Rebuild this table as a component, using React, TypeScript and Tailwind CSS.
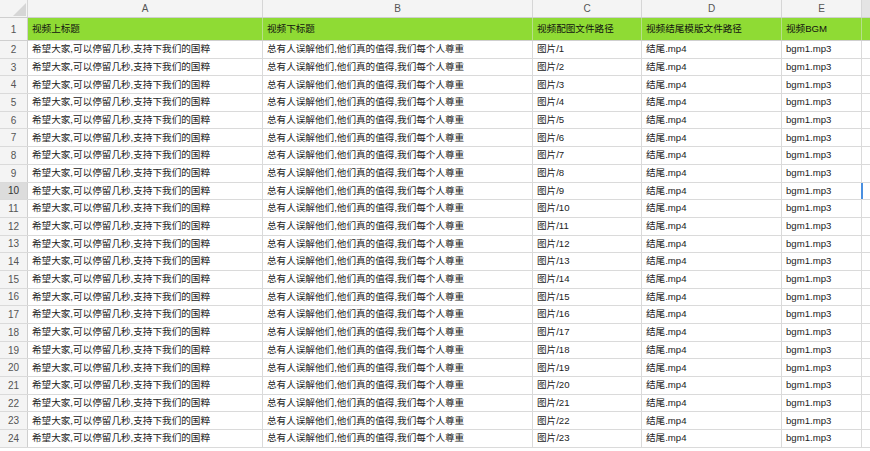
import React from 'react';

const cols = [
  { key: 'A', w: 'w-[235px]' },
  { key: 'B', w: 'w-[270px]' },
  { key: 'C', w: 'w-[109px]' },
  { key: 'D', w: 'w-[140px]' },
  { key: 'E', w: 'w-[80px]' },
];

const headerRow = ['视频上标题', '视频下标题', '视频配图文件路径', '视频结尾模版文件路径', '视频BGM'];

// data rows 2..24
const rows = Array.from({ length: 23 }, (_, i) => [
  '希望大家,可以停留几秒,支持下我们的国粹',
  '总有人误解他们,他们真的值得,我们每个人尊重',
  `图片/${i + 1}`,
  '结尾.mp4',
  'bgm1.mp3',
]);

const App: React.FC = () => {
  return (
    <div
      className="w-[870px] h-[451px] overflow-hidden bg-white text-[9.6px] text-[#222]"
      style={{ fontFamily: '"Liberation Sans", "Noto Sans CJK SC", sans-serif' }}
    >
      {/* Column letters */}
      <div className="flex h-[18px] bg-[#f4f4f4] border-b border-[#cfcfcf] text-[10px]">
        <div className="relative w-[28px] shrink-0 border-r border-[#d6d6d6]">
          <svg className="absolute left-0 top-0" width="28" height="18">
            <polygon points="13,16 26,16 26,3" fill="#d6d6d6" />
          </svg>
        </div>
        {cols.map(c => (
          <div
            key={c.key}
            className={`${c.w} shrink-0 border-r border-[#d6d6d6] flex items-center justify-center text-[#555]`}
          >
            {c.key}
          </div>
        ))}
        <div className="flex-1 bg-[#e4e4e4]" />
      </div>

      {/* Row 1: green header */}
      <div className="flex h-[23px] border-b border-[#cfcfcf]">
        <div className="w-[28px] shrink-0 bg-[#f4f4f4] border-r border-[#cfcfcf] flex items-center justify-center text-[#555] text-[10px]">
          1
        </div>
        {cols.map((c, j) => (
          <div
            key={c.key}
            className={`${c.w} shrink-0 bg-[#8fdb34] border-r border-[#b7e08a] flex items-center pl-[4px] whitespace-nowrap overflow-hidden text-[#111]`}
          >
            {headerRow[j]}
          </div>
        ))}
        <div className="flex-1 bg-[#8fdb34]" />
      </div>

      {/* Data rows */}
      {rows.map((r, i) => {
        const n = i + 2;
        const sel = n === 10;
        return (
          <div key={n} className="flex h-[17.7px] border-b border-[#dadada]">
            <div
              className={`w-[28px] shrink-0 border-r border-[#cfcfcf] flex items-center justify-center text-[10px] ${
                sel ? 'bg-[#dcdcdc] text-[#333]' : 'bg-[#f4f4f4] text-[#555]'
              }`}
            >
              {n}
            </div>
            {cols.map((c, j) => (
              <div
                key={c.key}
                className={`${c.w} shrink-0 border-r border-[#dadada] flex items-center pl-[4px] whitespace-nowrap overflow-hidden`}
              >
                {r[j]}
              </div>
            ))}
            <div className={`flex-1 ${sel ? 'border-l-2 border-[#4a8fe0] -ml-[1px]' : ''}`} />
          </div>
        );
      })}
    </div>
  );
};

export default App;
